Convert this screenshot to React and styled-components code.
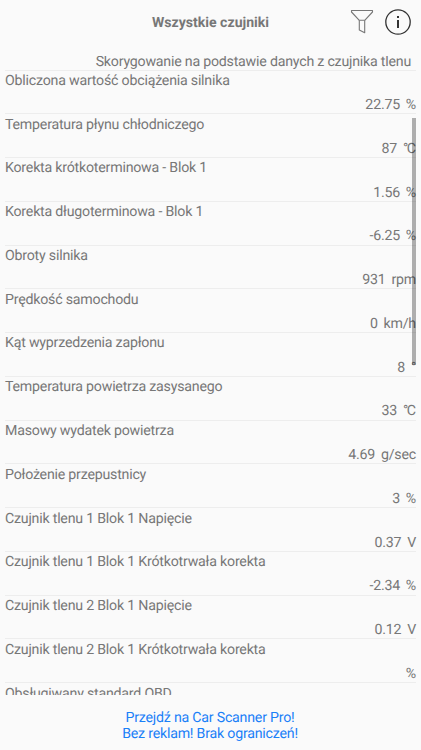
import React from "react";
import styled, { createGlobalStyle } from "styled-components";

const GlobalStyle = createGlobalStyle`
  body {
    margin: 0;
    background-color: #fafafa;
  }
`;

const Screen = styled.div`
  display: flex;
  flex-direction: column;
  position: relative;
  width: 421px;
  height: 750px;
  overflow: hidden;
  background-color: #fafafa;
  color: #777;
  font-family: Roboto, "Noto Sans", sans-serif;
  font-size: 14.2px;
  letter-spacing: -0.22px;
  line-height: 17px;
  text-rendering: geometricPrecision;
`;

const Header = styled.header`
  display: grid;
  grid-template-columns: 1fr auto 1fr;
  align-items: center;
  flex: none;
  height: 44px;
  margin-bottom: 12px;
`;

const Title = styled.h1`
  grid-column: 2;
  margin: 0;
  padding-top: 2px;
  font-size: 14.1px;
  font-weight: 700;
  letter-spacing: 0;
  line-height: 17px;
`;

const Actions = styled.div`
  display: flex;
  justify-content: flex-end;
  align-items: center;
  gap: 11px;
  padding-right: 10px;
`;

const IconButton = styled.button`
  display: flex;
  padding: 0;
  border: 0;
  background: none;
  color: ${props => (props.dark ? "#333" : "#777")};
`;

const SensorList = styled.ul`
  list-style: none;
  flex: none;
  height: 638.5px;
  margin: 0;
  padding: 0 5px;
  overflow: hidden;
`;

const Note = styled.li`
  display: flex;
  justify-content: flex-end;
  align-items: flex-end;
  height: 13.5px;
  padding-right: 5px;
  border-bottom: 1px solid #ededed;
  line-height: 13.6px;
  white-space: nowrap;
`;

const Row = styled.li`
  display: flex;
  flex-direction: column;
  justify-content: space-between;
  box-sizing: border-box;
  height: 43.77px;
  padding: 2.4px 0 0;
  border-bottom: 1px solid #ededed;
  white-space: nowrap;
`;

const Reading = styled.div`
  display: flex;
  justify-content: flex-end;
  gap: 5.8px;
  letter-spacing: -0.2px;
  line-height: 15.2px;
`;

const Unit = styled.span`
  ${props => props.tight && `
    margin-right: 1.5px;
    letter-spacing: -1.5px;
  `}
`;

const ScrollThumb = styled.div`
  position: absolute;
  top: 118px;
  right: 5px;
  width: 4px;
  height: 247px;
  background-color: rgba(0, 0, 0, 0.3);
`;

const Footer = styled.footer`
  flex: 1;
  padding: 15px 1px 0 0;
  color: #1a80f8;
  line-height: 16.5px;
  text-align: center;
`;

const sensors = [
  { name: "Obliczona wartość obciążenia silnika", value: "22.75", unit: "%" },
  { name: "Temperatura płynu chłodniczego", value: "87", unit: "°C" },
  { name: "Korekta krótkoterminowa - Blok 1", value: "1.56", unit: "%" },
  { name: "Korekta długoterminowa - Blok 1", value: "-6.25", unit: "%" },
  { name: "Obroty silnika", value: "931", unit: "rpm" },
  { name: "Prędkość samochodu", value: "0", unit: "km/h" },
  { name: "Kąt wyprzedzenia zapłonu", value: "8", unit: "°" },
  { name: "Temperatura powietrza zasysanego", value: "33", unit: "°C" },
  { name: "Masowy wydatek powietrza", value: "4.69", unit: "g/sec" },
  { name: "Położenie przepustnicy", value: "3", unit: "%" },
  { name: "Czujnik tlenu 1 Blok 1 Napięcie", value: "0.37", unit: "V" },
  { name: "Czujnik tlenu 1 Blok 1 Krótkotrwała korekta", value: "-2.34", unit: "%" },
  { name: "Czujnik tlenu 2 Blok 1 Napięcie", value: "0.12", unit: "V" },
  { name: "Czujnik tlenu 2 Blok 1 Krótkotrwała korekta", value: "", unit: "%" },
  { name: "Obsługiwany standard OBD", value: "", unit: "" }
];

function FilterIcon() {
  return (
    <svg width="24" height="26" viewBox="0 0 24 26" fill="none" stroke="currentColor" strokeWidth="1.1" strokeLinejoin="round">
      <path d="M1.5 1.5H22.5V3L14.7 11.3H9.3L1.5 3Z" />
      <path d="M9.3 11.3V21L14.7 23.7V11.3" />
    </svg>
  );
}

function InfoIcon() {
  return (
    <svg width="26" height="26" viewBox="0 0 26 26" fill="none" stroke="currentColor">
      <circle cx="13" cy="13" r="12.2" strokeWidth="1.3" />
      <path d="M13 11V19" strokeWidth="2" />
      <path d="M13 7V9" strokeWidth="2" />
    </svg>
  );
}

function Sensor({ name, value, unit }) {
  return (
    <Row>
      <span>{name}</span>
      <Reading>
        <span>{value}</span>
        <Unit tight={unit === "°C"}>{unit}</Unit>
      </Reading>
    </Row>
  );
}

function App() {
  return (
    <Screen>
      <GlobalStyle />
      <Header>
        <Title>Wszystkie czujniki</Title>
        <Actions>
          <IconButton aria-label="Filtr">
            <FilterIcon />
          </IconButton>
          <IconButton dark aria-label="Informacje">
            <InfoIcon />
          </IconButton>
        </Actions>
      </Header>
      <SensorList>
        <Note>
          <span>Skorygowanie na podstawie danych z czujnika tlenu</span>
        </Note>
        {sensors.map(sensor => (
          <Sensor key={sensor.name} {...sensor} />
        ))}
      </SensorList>
      <ScrollThumb />
      <Footer>
        Przejdź na Car Scanner Pro!
        <br />
        Bez reklam! Brak ograniczeń!
      </Footer>
    </Screen>
  );
}

export default App;
